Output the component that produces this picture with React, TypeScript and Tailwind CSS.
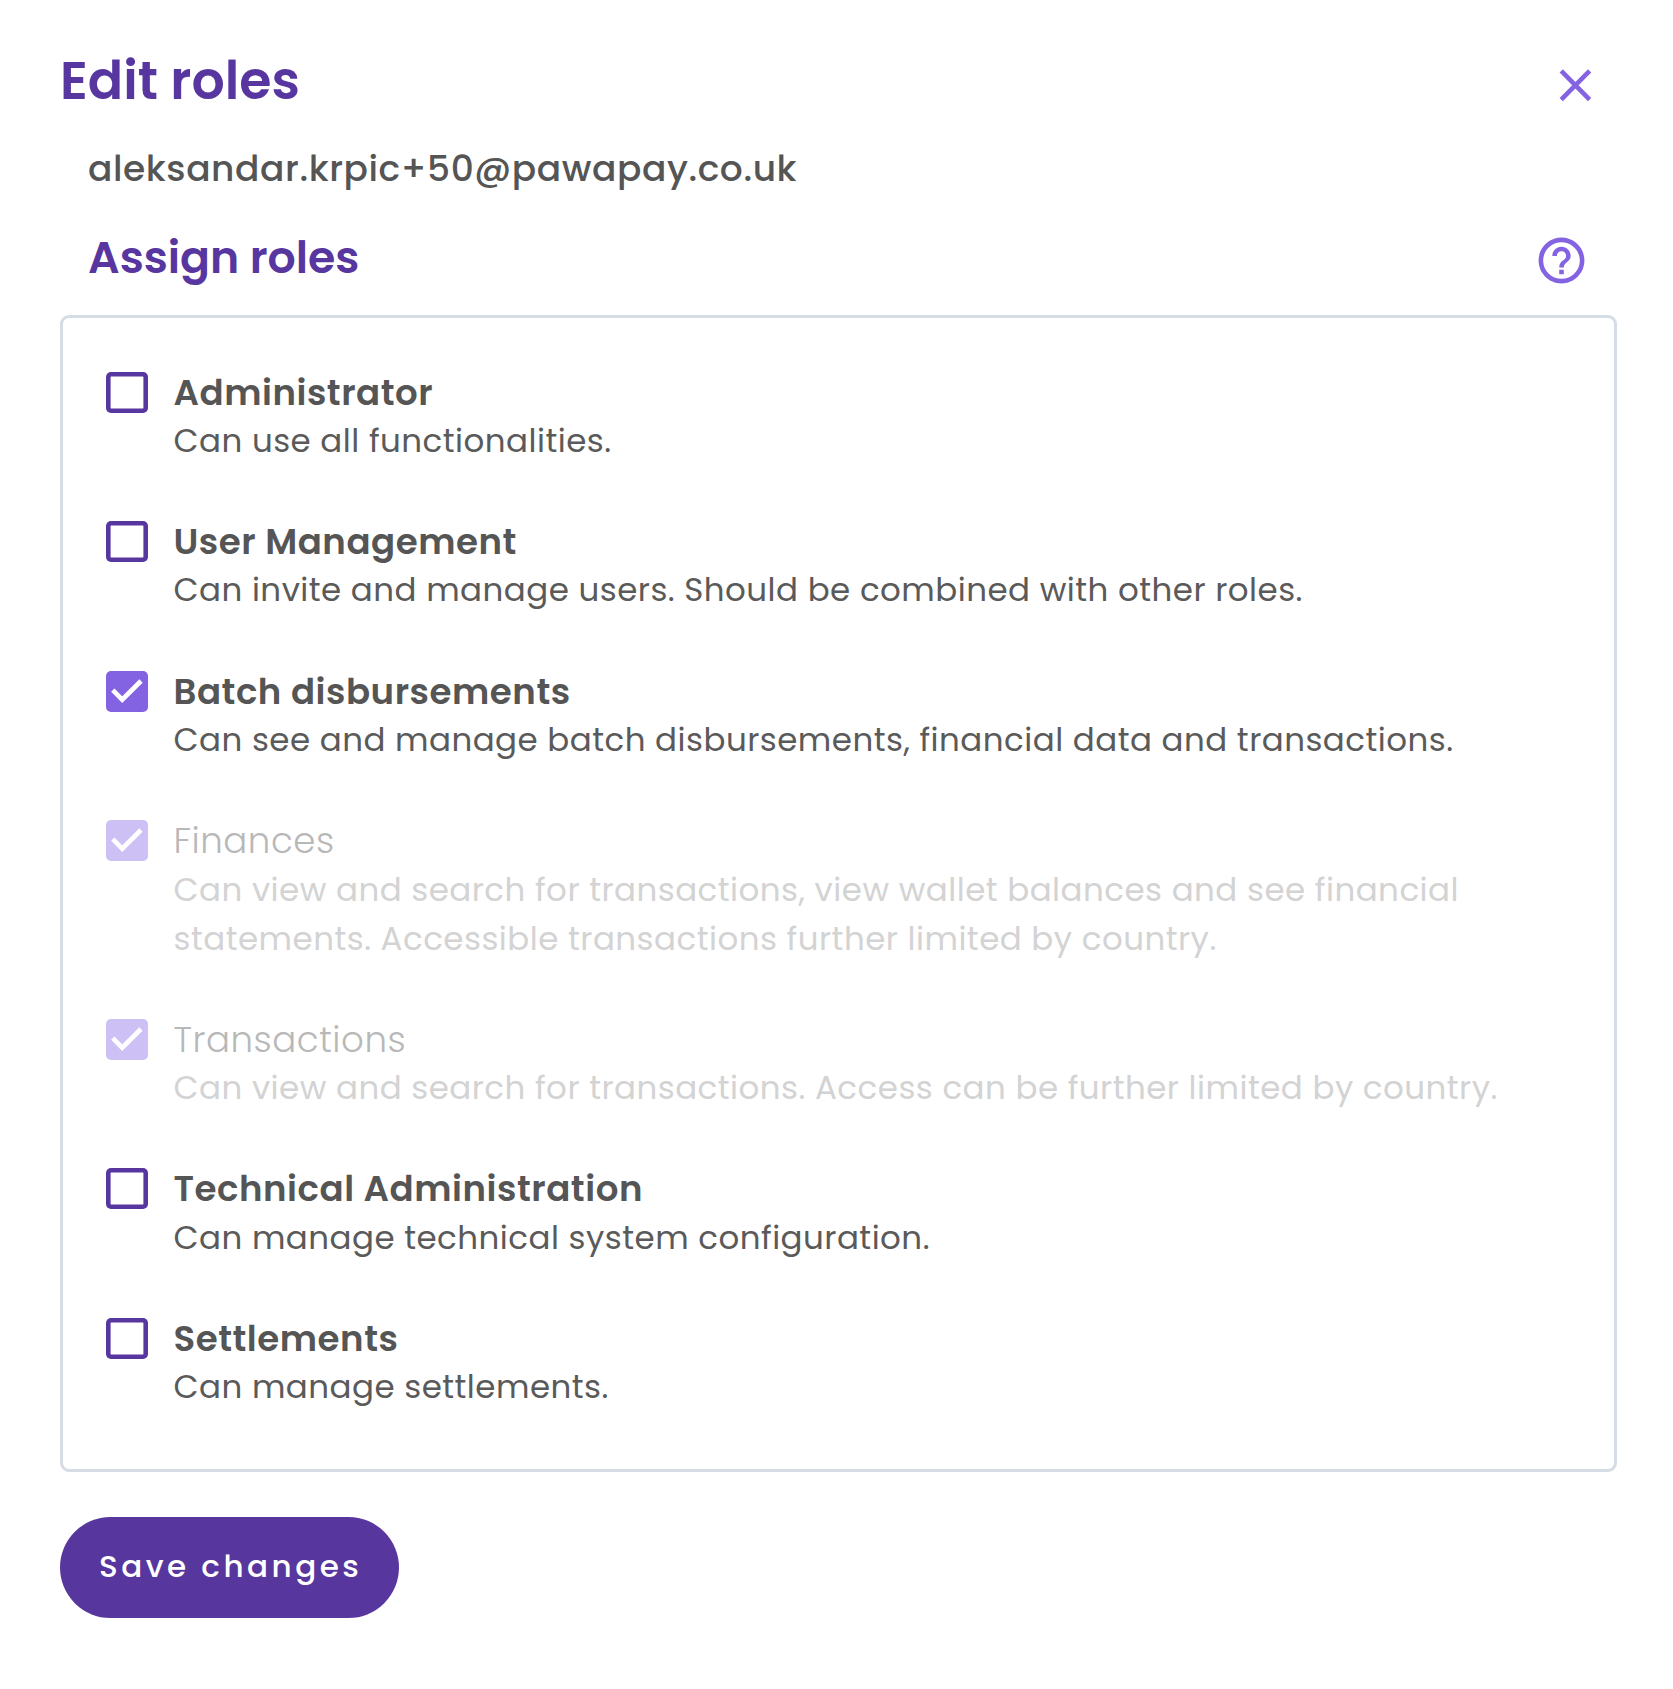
import { useState } from "react";

type Role = {
  id: string;
  title: string;
  lines: string[];
  disabled?: boolean;
};

const ROLES: Role[] = [
  {
    id: "administrator",
    title: "Administrator",
    lines: ["Can use all functionalities."],
  },
  {
    id: "user-management",
    title: "User Management",
    lines: ["Can invite and manage users. Should be combined with other roles."],
  },
  {
    id: "batch-disbursements",
    title: "Batch disbursements",
    lines: ["Can see and manage batch disbursements, financial data and transactions."],
  },
  {
    id: "finances",
    title: "Finances",
    lines: [
      "Can view and search for transactions, view wallet balances and see financial",
      "statements. Accessible transactions further limited by country.",
    ],
    disabled: true,
  },
  {
    id: "transactions",
    title: "Transactions",
    lines: ["Can view and search for transactions. Access can be further limited by country."],
    disabled: true,
  },
  {
    id: "technical-administration",
    title: "Technical Administration",
    lines: ["Can manage technical system configuration."],
  },
  {
    id: "settlements",
    title: "Settlements",
    lines: ["Can manage settlements."],
  },
];

function cx(...parts: Array<string | false | undefined>) {
  return parts.filter(Boolean).join(" ");
}

function Checkbox({ checked, disabled }: { checked: boolean; disabled?: boolean }) {
  return (
    <span
      className={cx(
        "flex h-[41px] w-[42px] shrink-0 items-center justify-center rounded-[5px]",
        !checked && "shadow-[inset_0_0_0_4.6px_#5736a0]",
        checked && !disabled && "bg-[#8463e3]",
        checked && disabled && "bg-[#cdc0f5]",
      )}
    >
      {checked && (
        <svg width="42" height="41" viewBox="0 0 42 41" fill="none" aria-hidden="true">
          <path d="M6.8 19.2L16.2 28.6L35 10" stroke="#fff" strokeWidth="4.7" />
        </svg>
      )}
    </span>
  );
}

function RoleRow({
  role,
  checked,
  onToggle,
}: {
  role: Role;
  checked: boolean;
  onToggle: () => void;
}) {
  return (
    <button
      type="button"
      role="checkbox"
      aria-checked={checked}
      disabled={role.disabled}
      onClick={onToggle}
      className="flex w-full items-start gap-[25.3px] text-left"
    >
      <Checkbox checked={checked} disabled={role.disabled} />
      <span className="flex flex-col whitespace-nowrap">
        <span
          className={cx(
            "h-[47.4px] text-[35.6px] leading-[41.6px] tracking-[0.54px]",
            role.disabled ? "font-light text-[#b8b8b8]" : "font-semibold text-[#555555]",
          )}
        >
          {role.title}
        </span>
        {role.lines.map((line) => (
          <span
            key={line}
            className={cx(
              "h-[48.9px] text-[32.5px] leading-[44px] tracking-[0.47px]",
              role.disabled ? "text-[#d3d3d3]" : "text-[#5a5a5a]",
            )}
          >
            {line}
          </span>
        ))}
      </span>
    </button>
  );
}

export default function App() {
  const [selected, setSelected] = useState<string[]>([
    "batch-disbursements",
    "finances",
    "transactions",
  ]);

  const toggle = (id: string) =>
    setSelected((prev) =>
      prev.includes(id) ? prev.filter((x) => x !== id) : [...prev, id],
    );

  return (
    <main className="h-[1689px] w-[1673px] overflow-hidden bg-white pl-[60px] pr-[56px] pt-[50px] font-['Poppins','Inter',sans-serif]">
      {/* Header */}
      <header className="flex h-[88px] items-start justify-between">
        <h1 className="text-[52.2px] font-semibold leading-[61px] text-[#5736a0]">Edit roles</h1>
        <button type="button" aria-label="Close" className="mr-[25px] mt-[18px]">
          <svg width="33" height="34" viewBox="0 0 33 34" fill="none" aria-hidden="true">
            <path d="M2.2 2.9L30.6 31.7M30.6 2.9L2.2 31.7" stroke="#8463e3" strokeWidth="4.6" />
          </svg>
        </button>
      </header>

      <p className="h-[84px] pl-[28px] text-[36px] font-medium leading-[61px] tracking-[0.57px] text-[#555555]">
        aleksandar.krpic+50@pawapay.co.uk
      </p>

      <div className="flex h-[93px] items-start justify-between pl-[28px]">
        <h2 className="text-[44.2px] font-semibold leading-[71px] text-[#5736a0]">
          Assign roles
        </h2>
        <button type="button" aria-label="Help" className="mr-[28px] mt-[11px]">
          <svg width="55" height="55" viewBox="0 0 24 24" fill="#8463e3" aria-hidden="true">
            <path d="M11 18h2v-2h-2v2zm1-16C6.48 2 2 6.48 2 12s4.480 10 10 10 10-4.480 10-10S17.520 2 12 2zm0 18c-4.410 0-8-3.590-8-8s3.590-8 8-8 8 3.590 8 8-3.590 8-8 8zm0-14c-2.210 0-4 1.790-4 4h2c0-1.100.9-2 2-2s2 .9 2 2c0 2-3 1.750-3 5h2c0-2.250 3-2.500 3-5 0-2.210-1.790-4-4-4z" />
          </svg>
        </button>
      </div>

      {/* Roles */}
      <section className="flex h-[1157px] flex-col gap-[53.3px] rounded-[9px] border-[3px] border-[#d5dce4] pl-[43.2px] pt-[53.5px]">
        {ROLES.map((role) => (
          <RoleRow
            key={role.id}
            role={role}
            checked={selected.includes(role.id)}
            onToggle={() => toggle(role.id)}
          />
        ))}
      </section>

      <button
        type="button"
        className="mt-[45px] flex h-[101px] w-[339px] rounded-full bg-[#57369e] pl-[39px] text-[31px] font-medium leading-[98px] tracking-[3.5px] text-white"
      >
        <span className="whitespace-nowrap">Save changes</span>
      </button>
    </main>
  );
}
